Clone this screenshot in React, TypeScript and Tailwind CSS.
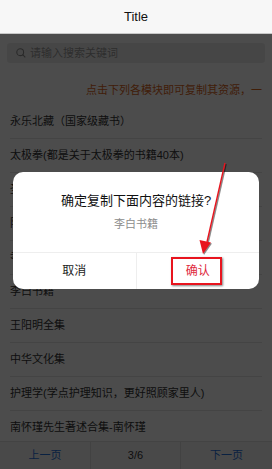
import React from "react";

const rows = [
  "永乐北藏（国家级藏书）",
  "太极拳(都是关于太极拳的书籍40本)",
  "圣经故事合集",
  "阳明心学讲义",
  "孝经全集",
  "李白书籍",
  "王阳明全集",
  "中华文化集",
  "护理学(学点护理知识，更好照顾家里人)",
  "南怀瑾先生著述合集-南怀瑾",
];

export default function App() {
  return (
    <div
      className="relative w-[272px] h-[469px] overflow-hidden bg-white flex flex-col"
      style={{ fontFamily: '"Liberation Sans", "Noto Sans CJK SC", sans-serif' }}
    >
      <div className="h-[34px] shrink-0 bg-[#f7f7f7] border-b border-[#c8c8c8] flex items-center justify-center text-[13px] text-[#111]">
        Title
      </div>
      <div className="flex-1 flex flex-col overflow-hidden">
        <div className="px-[7px] pt-[9px]">
          <div className="h-[20px] bg-[#ececec] rounded-[3px] flex items-center pl-[9px] gap-[4px]">
            <svg width="10" height="10" viewBox="0 0 10 10" fill="none" stroke="#8a8a8a" strokeWidth="1.1">
              <circle cx="4.2" cy="4.2" r="3.4" />
              <path d="M6.7 6.7 L9.3 9.3" />
            </svg>
            <span className="text-[11px] text-[#9a9a9a] leading-none">请输入搜索关键词</span>
          </div>
        </div>
        <div className="h-[42px] shrink-0 pt-[20px] pr-[10px] whitespace-nowrap flex justify-end text-[11px] leading-[14px] text-[#d8651c]">
          点击下列各模块即可复制其资源，一
        </div>
        <div className="flex flex-col">
          {rows.map((r, i) => (
            <div
              key={i}
              className="h-[34px] shrink-0 mx-[10px] flex items-center text-[11px] text-[#333] border-b border-[#e4e4e4] whitespace-nowrap"
            >
              {r}
            </div>
          ))}
        </div>
      </div>
      <div className="absolute left-0 right-0 bottom-0 h-[28px] bg-[#f6f6f6] border-t border-[#e0e0e0] flex text-[11px]">
        <div className="w-[91px] flex items-center justify-center text-[#1e6fd9] border-r border-[#dcdcdc]">上一页</div>
        <div className="w-[90px] flex items-center justify-center text-[#333] border-r border-[#dcdcdc]">3/6</div>
        <div className="flex-1 flex items-center justify-center text-[#1e6fd9]">下一页</div>
      </div>

      <div className="absolute left-0 right-0 bottom-0 top-[34px] bg-black/70" />

      <div className="absolute left-[13px] top-[172px] w-[246px] h-[117px] bg-white rounded-[10px] flex flex-col overflow-hidden">
        <div className="h-[80px] flex flex-col items-center pt-[20px]">
          <div className="text-[13px] text-[#111] leading-[18px]">确定复制下面内容的链接?</div>
          <div className="text-[11px] text-[#8c8c8c] leading-[16px] mt-[6px]">李白书籍</div>
        </div>
        <div className="flex-1 flex border-t border-[#eeeeee]">
          <div className="flex-1 flex items-center justify-center text-[12px] text-[#222] border-r border-[#eeeeee]">取消</div>
          <div className="flex-1 flex items-center justify-center text-[12px] text-[#e0283c]">确认</div>
        </div>
      </div>

      <div className="absolute left-[171px] top-[257px] w-[51px] h-[28px] border-2 border-[#e8141e] shadow-[1px_1px_2px_rgba(0,0,0,0.5)]" />

      <svg className="absolute left-0 top-0" width="272" height="469" viewBox="0 0 272 469">
        <g transform="translate(1,1)" opacity="0.45">
          <line x1="225" y1="163" x2="207" y2="242" stroke="#000" strokeWidth="1.6" />
          <polygon points="203,254 199.5,240 211,242.5" fill="#000" />
        </g>
        <line x1="225" y1="163" x2="207" y2="242" stroke="#e8141e" strokeWidth="1.4" />
        <polygon points="203,254 199.5,240 211,242.5" fill="#e8141e" />
      </svg>
    </div>
  );
}
